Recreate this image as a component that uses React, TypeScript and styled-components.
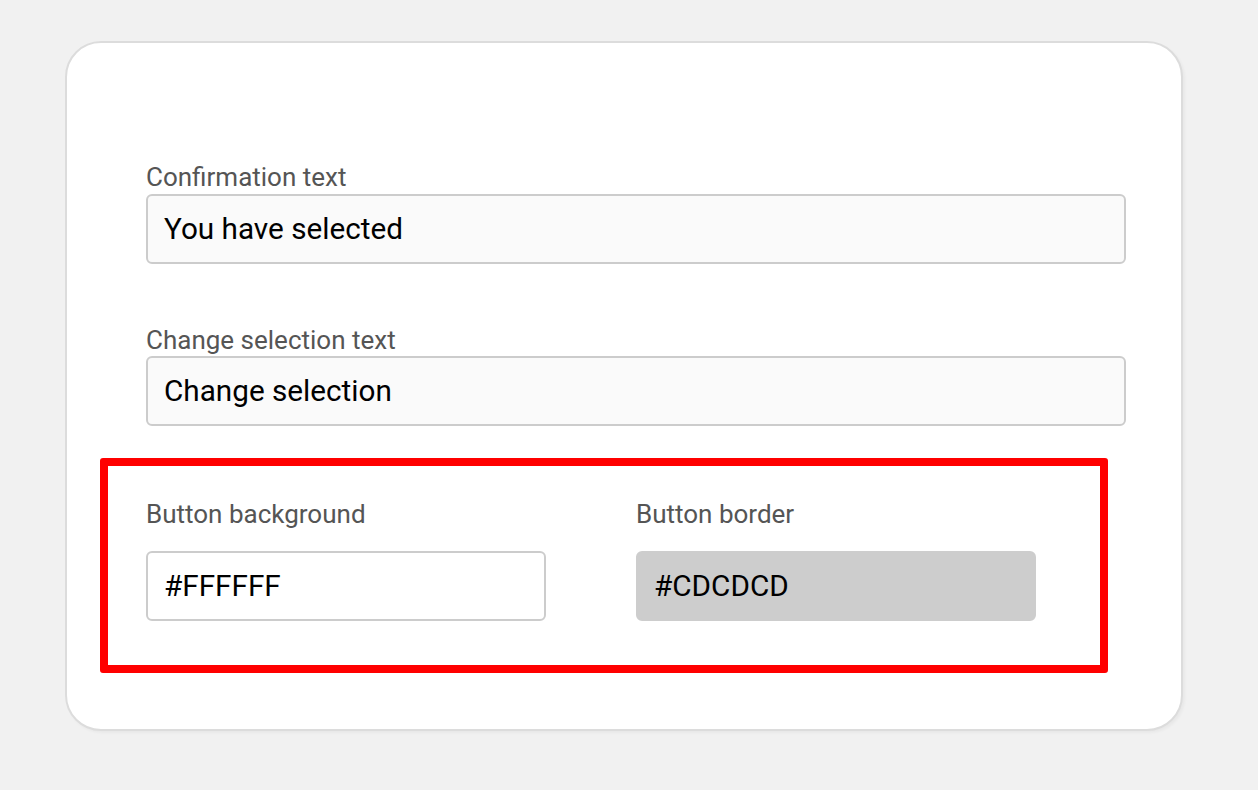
import React from "react";
import styled, { createGlobalStyle } from "styled-components";

const Global = createGlobalStyle`
  html, body { margin: 0; padding: 0; background: #f1f1f1; }
  body { font-family: Roboto, "Liberation Sans", sans-serif; }
  * { box-sizing: border-box; }
`;

const Page = styled.div`
  width: 1258px;
  height: 790px;
  padding: 41px 0 0 65px;
`;

const Card = styled.div`
  width: 1118px;
  height: 690px;
  background: #ffffff;
  border: 2px solid #dcdcdc;
  border-radius: 36px;
  box-shadow: 2px 2px 3px rgba(0, 0, 0, 0.04);
  padding: 119px 55px 0 79px;
  display: flex;
  flex-direction: column;
`;

const Field = styled.div<{ $gap: number; $mt: number }>`
  display: flex;
  flex-direction: column;
  gap: ${(p) => p.$gap}px;
  margin-top: ${(p) => p.$mt}px;
`;

const Label = styled.label`
  font-size: 26px;
  line-height: 30px;
  color: #555555;
`;

const Input = styled.div<{ $variant?: "plain" | "white" | "filled" }>`
  height: 70px;
  display: flex;
  align-items: center;
  padding: 0 0 2px 16px;
  font-size: 29.7px;
  color: #000000;
  border-radius: 6px;
  border: 2px solid
    ${(p) => (p.$variant === "filled" ? "#cdcdcd" : "#cccccc")};
  background: ${(p) =>
    p.$variant === "filled" ? "#cdcdcd" : p.$variant === "white" ? "#ffffff" : "#fafafa"};
  width: ${(p) => (p.$variant && p.$variant !== "plain" ? "400px" : "100%")};
`;

const ColorRow = styled.div`
  position: relative;
  margin-top: 73px;
  display: grid;
  grid-template-columns: 490px 490px;
`;

const Highlight = styled.div`
  position: absolute;
  left: -46px;
  top: -41px;
  width: 1008px;
  height: 215px;
  border: 8px solid #ff0000;
  border-radius: 3px;
  pointer-events: none;
`;

export default function App() {
  return (
    <>
      <Global />
      <Page>
        <Card>
          <Field $gap={2} $mt={0}>
            <Label>Confirmation text</Label>
            <Input>You have selected</Input>
          </Field>
          <Field $gap={1} $mt={61}>
            <Label>Change selection text</Label>
            <Input>Change selection</Input>
          </Field>
          <ColorRow>
            <Field $gap={22} $mt={0}>
              <Label>Button background</Label>
              <Input $variant="white">#FFFFFF</Input>
            </Field>
            <Field $gap={22} $mt={0}>
              <Label>Button border</Label>
              <Input $variant="filled">#CDCDCD</Input>
            </Field>
            <Highlight />
          </ColorRow>
        </Card>
      </Page>
    </>
  );
}
